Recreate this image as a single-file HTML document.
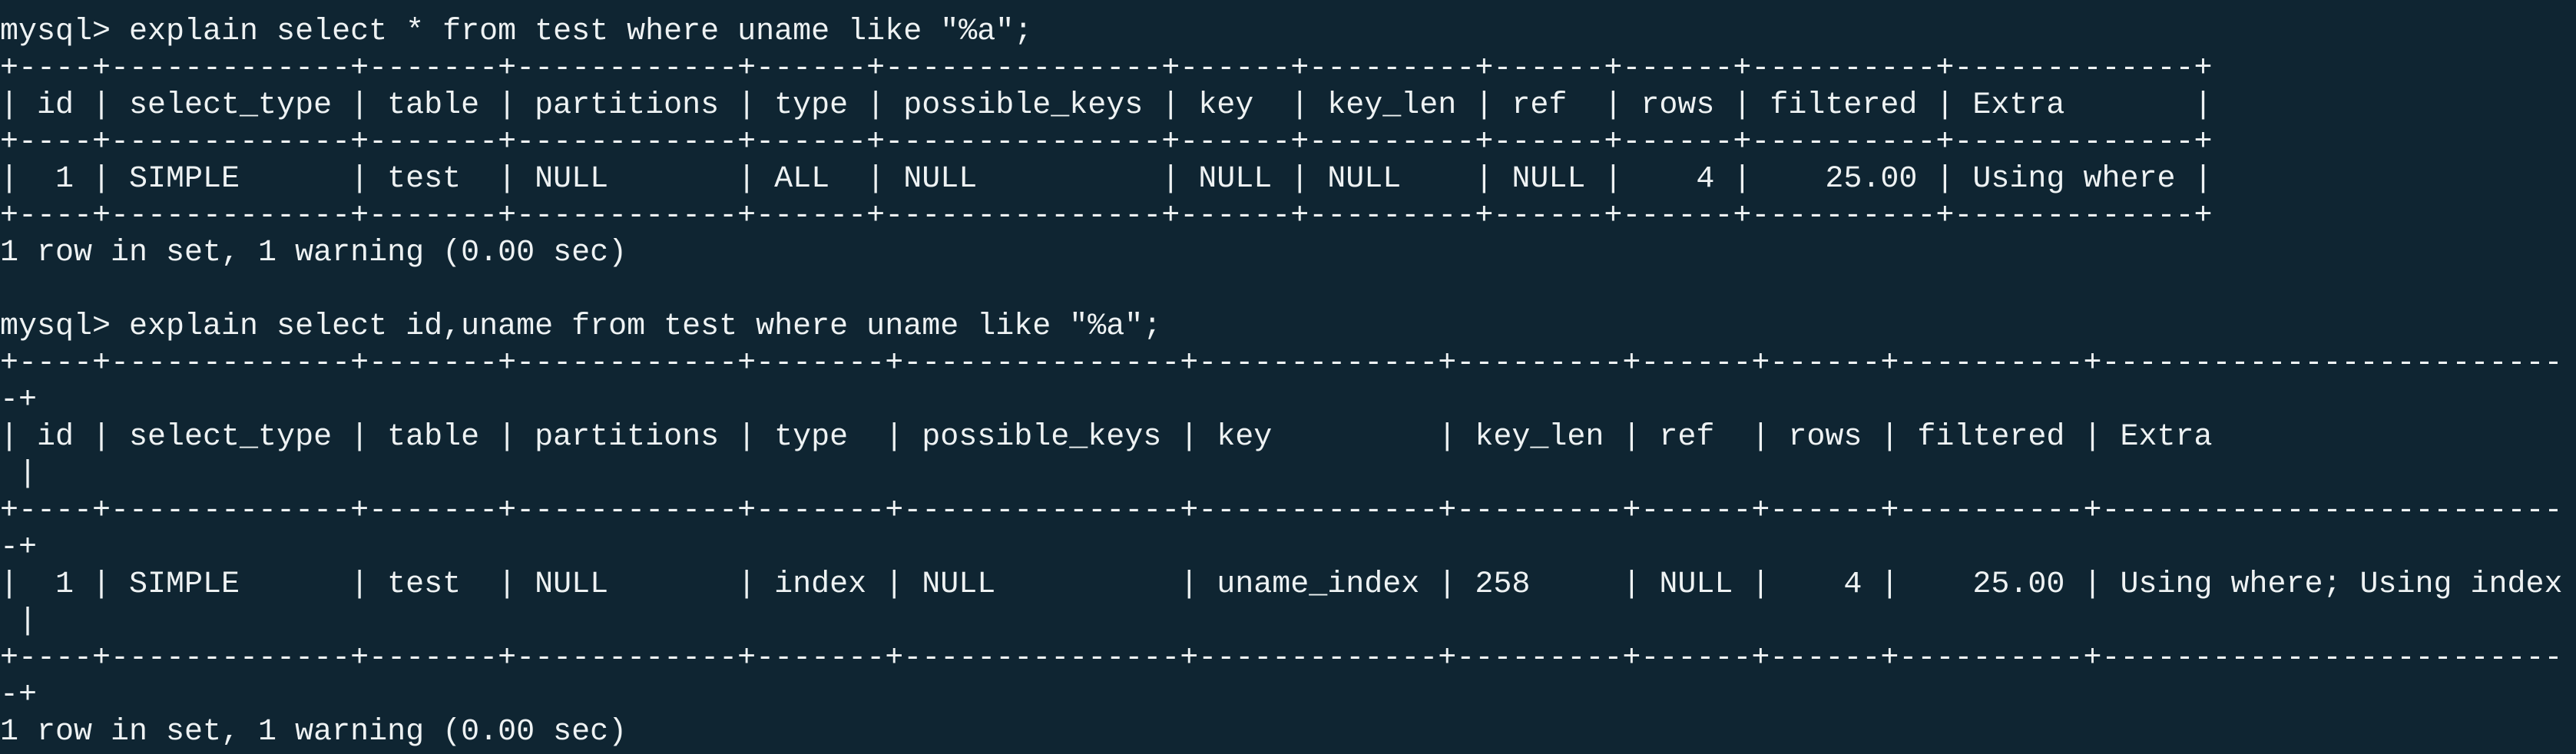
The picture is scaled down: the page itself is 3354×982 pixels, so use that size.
<!DOCTYPE html>
<html><head><meta charset="utf-8"><style>
html,body{margin:0;padding:0;background:#0f2532;}
body{width:3354px;height:982px;overflow:hidden;}
pre{margin:0;padding:18px 0 0 0;font-family:"Liberation Mono",monospace;font-size:40px;line-height:48px;color:#eef2f3;white-space:pre;}
</style></head><body><pre>mysql&gt; explain select * from test where uname like "%a";
+----+-------------+-------+------------+------+---------------+------+---------+------+------+----------+-------------+
| id | select_type | table | partitions | type | possible_keys | key  | key_len | ref  | rows | filtered | Extra       |
+----+-------------+-------+------------+------+---------------+------+---------+------+------+----------+-------------+
|  1 | SIMPLE      | test  | NULL       | ALL  | NULL          | NULL | NULL    | NULL |    4 |    25.00 | Using where |
+----+-------------+-------+------------+------+---------------+------+---------+------+------+----------+-------------+
1 row in set, 1 warning (0.00 sec)

mysql&gt; explain select id,uname from test where uname like "%a";
+----+-------------+-------+------------+-------+---------------+-------------+---------+------+------+----------+-------------------------
-+
| id | select_type | table | partitions | type  | possible_keys | key         | key_len | ref  | rows | filtered | Extra
 |
+----+-------------+-------+------------+-------+---------------+-------------+---------+------+------+----------+-------------------------
-+
|  1 | SIMPLE      | test  | NULL       | index | NULL          | uname_index | 258     | NULL |    4 |    25.00 | Using where; Using index
 |
+----+-------------+-------+------------+-------+---------------+-------------+---------+------+------+----------+-------------------------
-+
1 row in set, 1 warning (0.00 sec)</pre></body></html>
